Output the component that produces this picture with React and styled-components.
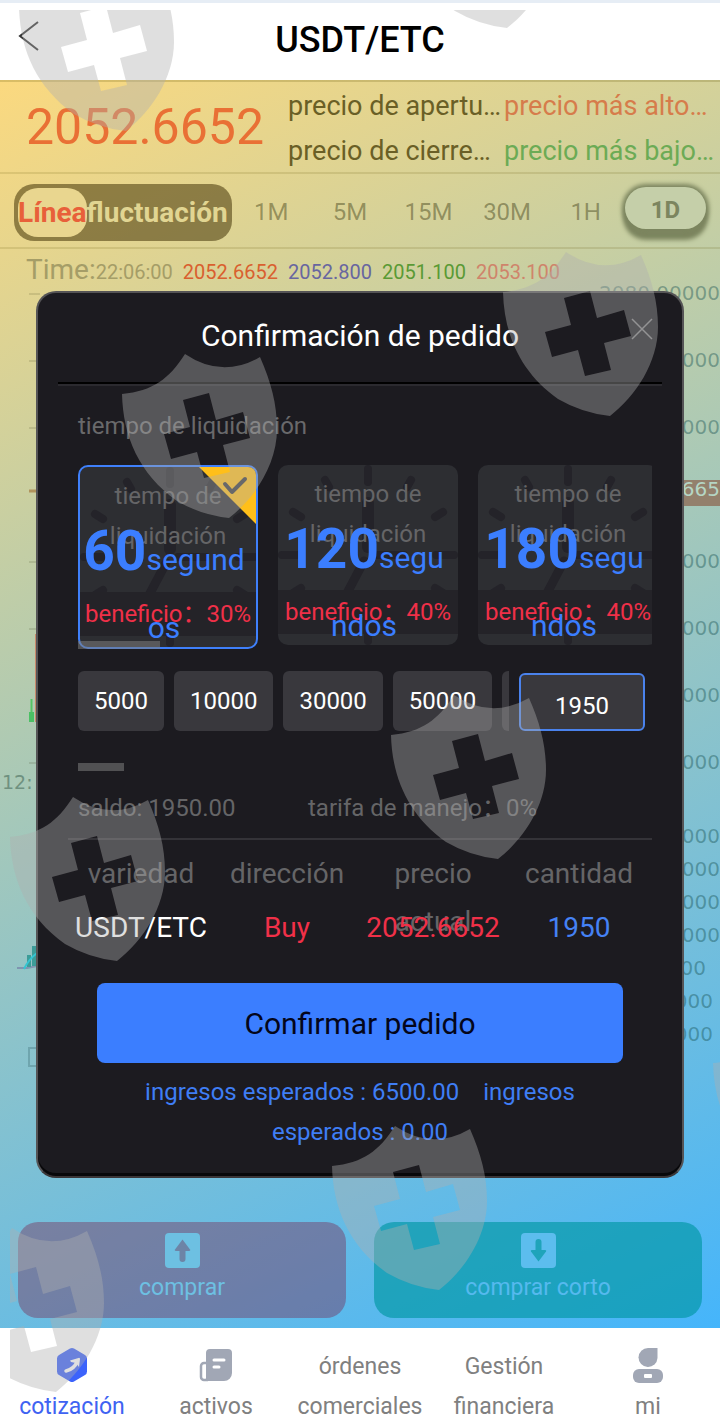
import styled, { createGlobalStyle } from "styled-components";

const GlobalStyle = createGlobalStyle`
  * {
    box-sizing: border-box;
  }

  body {
    margin: 0;
    font-family: Roboto, "Noto Sans CJK SC", sans-serif;
    font-size: 24px;
    background: #fff;
  }

  button,
  input {
    margin: 0;
    font-family: inherit;
    font-size: inherit;
  }
`;

const Page = styled.div`
  position: relative;
  overflow: hidden;
`;

const Header = styled.header`
  display: flex;
  align-items: center;
  justify-content: space-between;
  height: 80px;
  padding: 0 18px 4px;
  border-top: 3px solid #e6edf5;
  background: #fff;
`;

const IconButton = styled.button`
  display: flex;
  padding: 0;
  border: 0;
  background: none;
`;

const BackButton = styled(IconButton)`
  padding-bottom: 8px;
`;

const PageTitle = styled.h1`
  margin: 0;
  font-size: 36px;
  font-weight: 500;
  color: #000;
`;

const HeaderSpace = styled.span`
  width: 22px;
`;

const Market = styled.main`
  background: linear-gradient(155deg, #fbd97f, #45b5fb);
`;

const Quote = styled.section`
  display: flex;
  align-items: center;
  height: 94px;
  padding-left: 26px;
  border-top: 2px solid rgba(90, 80, 0, 0.2);
  border-bottom: 2px solid rgba(90, 80, 0, 0.14);
`;

const LastPrice = styled.strong`
  width: 262px;
  font-size: 50px;
  font-weight: 400;
  color: #e97035;
`;

const QuoteGrid = styled.div`
  flex: 1;
  display: grid;
  grid-template-columns: 214px 1fr;
  column-gap: 2px;
  padding-top: 3px;
  line-height: 45px;
  font-size: 27px;
  min-width: 0;
`;

const QuoteItem = styled.span`
  overflow: hidden;
  white-space: nowrap;
  text-overflow: ellipsis;
  color: ${(props) => props.$color};
`;

const Periods = styled.section`
  display: flex;
  align-items: center;
  height: 75px;
  padding: 3px 14px 0;
  border-bottom: 2px solid rgba(90, 80, 0, 0.14);
`;

const Toggle = styled.div`
  display: flex;
  align-items: center;
  width: 218px;
  height: 57px;
  padding-left: 4px;
  border-radius: 20px;
  background: rgba(60, 45, 0, 0.52);
`;

const ToggleButton = styled.button`
  height: 49px;
  padding: 0;
  border: 0;
  border-radius: 20px;
  font-size: 28px;
  font-weight: 700;
  background: ${(props) => (props.$active ? "#e9d68f" : "none")};
  color: ${(props) => (props.$active ? "#e8603a" : "#e1d592")};
`;

const PeriodList = styled.div`
  flex: 1;
  display: grid;
  grid-template-columns: repeat(6, 1fr);
  align-items: center;
`;

const Period = styled.button`
  justify-self: center;
  height: 42px;
  padding: 0;
  border: 0;
  background: none;
  color: rgba(60, 60, 20, 0.45);
`;

const ActivePeriod = styled(Period)`
  width: 81px;
  margin-bottom: 8px;
  padding-top: 4px;
  border-radius: 21px;
  font-weight: 700;
  background: #c5cfa9;
  color: #7c855f;
  box-shadow: 0 0 4px 3px #7c855f, 0 9px 4px 2px #7c855f;
`;

const TimeRow = styled.div`
  display: flex;
  align-items: baseline;
  gap: 10px;
  height: 40px;
  padding: 4px 26px 0;
  font-size: 20px;
`;

const TimeLabel = styled.span`
  color: #a59d67;

  b {
    font-size: 28px;
    font-weight: 400;
  }
`;

const Tick = styled.span`
  color: ${(props) => props.$color};
`;

const Chart = styled.section`
  display: flex;
  justify-content: space-between;
  height: 933px;
`;

const Axis = styled.div`
  width: 130px;
  margin-top: -29px;
  font-family: "DejaVu Sans", sans-serif;
  font-size: 20px;
  text-align: right;
  color: rgba(20, 80, 80, 0.42);
`;

const PriceLabel = styled.div`
  height: 67px;
  line-height: 67px;
`;

const PriceTag = styled.div`
  height: 26px;
  margin: 19px 0 22px;
  line-height: 18px;
  background: #93806c;
  color: #b5d6c4;
`;

const VolumeLabels = styled.div`
  padding-top: 24px;
`;

const VolumeLabel = styled.div`
  height: 33px;
  line-height: 33px;
  padding-right: ${(props) => props.$inset || 0}px;
`;

const TradeBar = styled.div`
  display: grid;
  grid-template-columns: 1fr 1fr;
  gap: 28px;
  padding: 0 18px 10px;
`;

const TradeButton = styled.button`
  display: flex;
  flex-direction: column;
  align-items: center;
  height: 96px;
  padding: 11px 0 0;
  border: 0;
  border-radius: 20px;
  font-size: 23px;
  line-height: 40px;
  background: ${(props) => props.$fill};
  color: ${(props) => props.$color};

  svg {
    flex: none;
  }
`;

const NavBar = styled.nav`
  display: grid;
  grid-template-columns: repeat(5, 1fr);
  height: 99px;
  background: #fff;
`;

const NavLink = styled.a`
  display: flex;
  flex-direction: column;
  align-items: center;
  padding-top: 19px;
  font-size: 23px;
  line-height: 40px;
  text-align: center;
  text-decoration: none;
  color: ${(props) => (props.$active ? "#3f63f2" : "#808080")};
`;

const NavIcon = styled.span`
  display: flex;
  align-items: center;
  height: 40px;
  padding-bottom: 4px;
`;

const Modal = styled.section`
  position: absolute;
  top: 291px;
  left: 36px;
  right: 36px;
  height: 887px;
  border: 2px solid #555456;
  border-bottom-color: #3a3638;
  border-radius: 20px;
  background: #1c1b20;
  box-shadow: inset 0 -3px 0 #08080a;
`;

const ModalHeader = styled.header`
  display: flex;
  align-items: center;
  justify-content: center;
  height: 91px;
  margin: 0 20px;
  padding-bottom: 4px;
  border-bottom: 2px solid #000;
  box-shadow: 0 2px 0 #2b2a2f;
`;

const ModalTitle = styled.h2`
  margin: 0;
  font-size: 30px;
  font-weight: 400;
  color: #fff;
`;

const CloseButton = styled(IconButton)`
  position: absolute;
  top: 25px;
  right: 29px;
`;

const ModalBody = styled.div`
  padding: 0 30px 0 40px;
`;

const SectionLabel = styled.p`
  margin: 0;
  padding: 22px 0 19px;
  line-height: 40px;
  color: #69696b;
`;

const CardList = styled.div`
  display: flex;
  align-items: flex-start;
  gap: 20px;
  height: 184px;
  overflow: hidden;
`;

const Card = styled.button`
  position: relative;
  flex: none;
  display: flex;
  flex-direction: column;
  align-items: stretch;
  width: 180px;
  height: ${(props) => (props.$active ? 184 : 180)}px;
  padding: 0;
  border: ${(props) => (props.$active ? "2px solid #3f80fb" : "0")};
  border-radius: 10px;
  overflow: hidden;
  background: #2d2e32;
`;

const ClockFace = styled.svg`
  position: absolute;
  top: 0;
  left: 0;
`;

const Corner = styled.svg`
  position: absolute;
  top: 0;
  right: 0;
`;

const CardCaption = styled.span`
  position: relative;
  height: 50px;
  padding: 9px 20px 0;
  line-height: 40px;
  color: #656567;
`;

const Seconds = styled.span`
  position: relative;
  z-index: 1;
  height: 75px;
  padding: 0 10px 0 2px;
  line-height: 68px;
  font-size: 30px;
  word-break: break-all;
  color: #3b7eff;

  b {
    font-size: 55px;
  }
`;

const Benefit = styled.span`
  position: relative;
  height: 44px;
  line-height: 44px;
  white-space: nowrap;
  background: #242328;
  color: #f03048;
`;

const ScrollThumb = styled.div`
  position: relative;
  width: ${(props) => props.$width}px;
  height: 8px;
  background: rgba(125, 125, 125, 0.55);
`;

const CardScroll = styled(ScrollThumb)`
  margin-top: -8px;
`;

const AmountRow = styled.div`
  display: flex;
  align-items: flex-end;
  gap: 10px;
  margin-top: 22px;
`;

const AmountList = styled.div`
  display: flex;
  gap: 10px;
  width: 431px;
  overflow: hidden;
`;

const Amount = styled.button`
  flex: none;
  height: 60px;
  padding: 0 16px;
  border: 0;
  border-radius: 6px;
  background: #39383d;
  color: #fff;
`;

const AmountInput = styled.input`
  width: 126px;
  height: 58px;
  padding: 8px 0 0;
  border: 2px solid #4a82ec;
  border-radius: 6px;
  text-align: center;
  background: #39383d;
  color: #fff;
`;

const AmountScroll = styled.div`
  padding: 32px 0 17px;
`;

const BalanceRow = styled.div`
  display: flex;
  line-height: 40px;
  color: #656567;
`;

const Balance = styled.span`
  width: 230px;
`;

const OrderTable = styled.table`
  display: block;
  margin: 10px 0 0 -10px;
  border-top: 2px solid #343338;
  font-size: 28px;
  line-height: 48px;

  thead,
  tbody {
    display: block;
  }

  tr {
    display: grid;
    grid-template-columns: repeat(4, 1fr);
  }

  thead tr {
    height: 64px;
    padding-top: 10px;
  }

  th {
    padding: 0 16px;
    font-weight: 400;
    color: #656567;
  }

  td {
    position: relative;
    padding: 0;
    text-align: center;
    white-space: nowrap;
  }
`;

const Cell = styled.td`
  color: ${(props) => props.$color};
`;

const ConfirmButton = styled.button`
  display: block;
  width: calc(100% - 48px);
  height: 80px;
  margin: 31px 0 0 19px;
  border: 0;
  border-radius: 8px;
  font-size: 30px;
  background: #3b7eff;
  color: #04061a;
`;

const Income = styled.p`
  margin: 9px 50px 0 40px;
  line-height: 40px;
  text-align: center;
  color: #3f7ef5;

  span + span {
    margin-left: 18px;
  }
`;

const Watermark = styled.svg`
  position: absolute;
  top: 10px;
  left: 10px;
  width: 100%;
  height: 100%;
  pointer-events: none;
`;

const shields = [
  [18, -33],
  [399, -136],
  [502, 252],
  [121, 354],
  [390, 695],
  [9, 797],
  [331, 1126],
  [-52, 1228],
  [712, 1023],
];

const ticks = [36, 103, 170, 304, 371, 505];

const cards = [
  { seconds: 60, benefit: "30%", active: true },
  { seconds: 120, benefit: "40%" },
  { seconds: 180, benefit: "40%" },
];

const amounts = [5000, 10000, 30000, 50000, 100000];

const BackIcon = () => (
  <svg width="22" height="32" viewBox="0 0 22 32" fill="none" stroke="#333" strokeWidth="2">
    <path d="M20 2 2 16l18 14" />
  </svg>
);

const CloseIcon = () => (
  <svg width="22" height="22" viewBox="0 0 22 22" stroke="#818183" strokeWidth="1.5">
    <path d="M1 1l20 20M21 1 1 21" />
  </svg>
);

const ArrowIcon = ({ down, color, arrow }) => (
  <svg width="35" height="35" viewBox="0 0 35 35">
    <rect width="35" height="35" rx="4" fill={color} />
    <g transform={down ? "rotate(180 17.5 17.5)" : undefined} fill={arrow}>
      <path d="M17.5 6.500 25 16.500a1 1 0 0 1-.8 1.500H10.800a1 1 0 0 1-.8-1.500z" />
      <rect x="14.500" y="13" width="6" height="16" rx="3" />
    </g>
  </svg>
);

const Clock = () => (
  <ClockFace width="180" height="180" viewBox="0 0 180 180" stroke="#242329" strokeLinecap="round">
    <g strokeWidth="8">
      <path d="M90 4v13M90 163v13M4 90h18M158 90h18" />
      <path d="M47 15l4 7M133 15l-4 7M15 47l8 5M165 47l-8 5M15 128l8-5M165 128l-8-5" />
    </g>
    <path d="M90 38v44" strokeWidth="12" />
    <path d="M98 90h28" strokeWidth="8" />
    <path d="M86 96 68 130" strokeWidth="9" />
  </ClockFace>
);

const SelectedCorner = () => (
  <Corner width="57" height="57" viewBox="0 0 57 57">
    <path d="M0 0h57v57z" fill="#ffbf19" />
    <path d="M26 17l7 8 13-13" fill="none" stroke="#3a3a3c" strokeWidth="4" strokeLinecap="round" strokeLinejoin="round" />
  </Corner>
);

const QuotesIcon = () => (
  <svg width="32" height="36" viewBox="0 0 32 36">
    <path d="M14 1.500a4 4 0 0 1 4 0l11 6.500a4 4 0 0 1 2 3.500v13a4 4 0 0 1-2 3.500l-11 6.500a4 4 0 0 1-4 0L3 28a4 4 0 0 1-2-3.500v-13A4 4 0 0 1 3 8z" fill="#3c63fb" />
    <path d="M10 24c5-1 9-4 11.500-10" fill="none" stroke="#fff" strokeWidth="3.5" strokeLinecap="round" />
    <path d="M14 13.500 22.500 11a1 1 0 0 1 1.500 1l-1 8-3-4-5-1z" fill="#fff" />
  </svg>
);

const AssetsIcon = () => (
  <svg width="34" height="34" viewBox="0 0 34 34">
    <path d="M8 15H5a3 3 0 0 0-3 3v11a3 3 0 0 0 3 3h4" fill="none" stroke="#a1a7b5" strokeWidth="2.5" />
    <path d="M11 1h18a4 4 0 0 1 4 4v20a8 8 0 0 1-8 8H5a3 3 0 0 0 2-3V5a4 4 0 0 1 4-4z" fill="#a1a7b5" />
    <path d="M15 12h10M15 19h5" stroke="#fff" strokeWidth="3" strokeLinecap="round" />
  </svg>
);

const UserIcon = () => (
  <svg width="30" height="35" viewBox="0 0 30 35">
    <path d="M15 0h9.500v10A9.500 9.500 0 1 1 15 0z" fill="#a1a7b5" />
    <rect y="21" width="30" height="14" rx="6" fill="#a1a7b5" />
    <rect x="11" y="26" width="8" height="4" rx="1" fill="#fff" />
  </svg>
);

const ChartDrawing = () => (
  <svg width="40" height="800" viewBox="0 0 40 800" fill="none">
    {ticks.map((y) => (
      <path key={y} d={`M29 ${y - 31}h11`} stroke="rgba(60,60,20,0.14)" strokeWidth="2" />
    ))}
    <path d="M29 202h11" stroke="#b0935c" strokeWidth="3" />
    <path d="M36 345v88" stroke="#c98a6c" strokeWidth="2" />
    <path d="M31.500 410v14" stroke="#55c465" strokeWidth="2" />
    <path d="M29 423h5v10h-5z" fill="#4bc064" />
    <path d="M17 679h10l10-2" stroke="#7f95b0" strokeWidth="2" />
    <path d="M27 666h4v12h-4zM32 657h5v20h-5z" fill="#3c9c98" />
    <path d="M24 680q5-10 13-16" stroke="#35c4d2" strokeWidth="2" />
    <path d="M40 759H29v18h11" stroke="#6fa5ae" strokeWidth="2" />
    <text x="2" y="500" fontFamily="DejaVu Sans, sans-serif" fontSize="19" fill="#6f9180">
      12:
    </text>
  </svg>
);

const OrderModal = () => (
  <Modal role="dialog" aria-labelledby="order-title">
    <ModalHeader>
      <ModalTitle id="order-title">Confirmación de pedido</ModalTitle>
      <CloseButton aria-label="cerrar">
        <CloseIcon />
      </CloseButton>
    </ModalHeader>
    <ModalBody>
      <SectionLabel>tiempo de liquidación</SectionLabel>
      <CardList>
        {cards.map((card) => (
          <Card key={card.seconds} $active={card.active}>
            <Clock />
            {card.active && <SelectedCorner />}
            <CardCaption>tiempo de liquidación</CardCaption>
            <Seconds>
              <b>{card.seconds}</b>segundos
            </Seconds>
            <Benefit>beneficio：{card.benefit}</Benefit>
          </Card>
        ))}
      </CardList>
      <CardScroll $width={82} />
      <AmountRow>
        <AmountList>
          {amounts.map((amount) => (
            <Amount key={amount}>{amount}</Amount>
          ))}
        </AmountList>
        <AmountInput aria-label="cantidad" defaultValue="1950" />
      </AmountRow>
      <AmountScroll>
        <ScrollThumb $width={46} />
      </AmountScroll>
      <BalanceRow>
        <Balance>saldo: 1950.00</Balance>
        <span>tarifa de manejo：0%</span>
      </BalanceRow>
      <OrderTable>
        <thead>
          <tr>
            <th>variedad</th>
            <th>dirección</th>
            <th>precio actual</th>
            <th>cantidad</th>
          </tr>
        </thead>
        <tbody>
          <tr>
            <Cell $color="#fff">USDT/ETC</Cell>
            <Cell $color="#f03048">Buy</Cell>
            <Cell $color="#f03048">2052.6652</Cell>
            <Cell $color="#4582f5">1950</Cell>
          </tr>
        </tbody>
      </OrderTable>
      <ConfirmButton>Confirmar pedido</ConfirmButton>
      <Income>
        <span>ingresos esperados : 6500.00</span> <span>ingresos esperados : 0.00</span>
      </Income>
    </ModalBody>
  </Modal>
);

const App = () => {
  return (
    <Page>
      <GlobalStyle />
      <Header>
        <BackButton aria-label="volver">
          <BackIcon />
        </BackButton>
        <PageTitle>USDT/ETC</PageTitle>
        <HeaderSpace />
      </Header>
      <Market>
        <Quote>
          <LastPrice>2052.6652</LastPrice>
          <QuoteGrid>
            <QuoteItem $color="#6a5f26">precio de apertura：2052.800</QuoteItem>
            <QuoteItem $color="#d67c4b">precio más alto：2053.100</QuoteItem>
            <QuoteItem $color="#6a5f26">precio de cierre：2052.6652</QuoteItem>
            <QuoteItem $color="#6cab55">precio más bajo：2051.100</QuoteItem>
          </QuoteGrid>
        </Quote>
        <Periods>
          <Toggle>
            <ToggleButton $active>Línea</ToggleButton>
            <ToggleButton>fluctuación</ToggleButton>
          </Toggle>
          <PeriodList>
            {["1M", "5M", "15M", "30M", "1H"].map((period) => (
              <Period key={period}>{period}</Period>
            ))}
            <ActivePeriod>1D</ActivePeriod>
          </PeriodList>
        </Periods>
        <TimeRow>
          <TimeLabel>
            <b>Time:</b>22:06:00
          </TimeLabel>
          <Tick $color="#d9602f">2052.6652</Tick>
          <Tick $color="#6866a0">2052.800</Tick>
          <Tick $color="#5a9a35">2051.100</Tick>
          <Tick $color="#cf846b">2053.100</Tick>
        </TimeRow>
        <Chart>
          <ChartDrawing />
          <Axis>
            <PriceLabel>2080.00000</PriceLabel>
            <PriceLabel>2072.00000</PriceLabel>
            <PriceLabel>2064.00000</PriceLabel>
            <PriceTag>2052.665</PriceTag>
            <PriceLabel>2048.00000</PriceLabel>
            <PriceLabel>2040.00000</PriceLabel>
            <PriceLabel>2032.00000</PriceLabel>
            <PriceLabel>2024.00000</PriceLabel>
            <VolumeLabels>
              <VolumeLabel>60000</VolumeLabel>
              <VolumeLabel>50000</VolumeLabel>
              <VolumeLabel>40000</VolumeLabel>
              <VolumeLabel>30000</VolumeLabel>
              <VolumeLabel $inset={14}>2000</VolumeLabel>
              <VolumeLabel $inset={7}>1000</VolumeLabel>
              <VolumeLabel $inset={7}>1000</VolumeLabel>
            </VolumeLabels>
          </Axis>
        </Chart>
        <TradeBar>
          <TradeButton $fill="rgba(125, 20, 61, 0.36)" $color="#6dc0e2">
            <ArrowIcon color="#6dc0e2" arrow="#6d84a6" />
            comprar
          </TradeButton>
          <TradeButton $fill="rgba(0, 150, 163, 0.65)" $color="#55b9ee">
            <ArrowIcon down color="#5cbdee" arrow="#1fa4ba" />
            comprar corto
          </TradeButton>
        </TradeBar>
      </Market>
      <NavBar>
        <NavLink href="#quotes" $active>
          <NavIcon>
            <QuotesIcon />
          </NavIcon>
          cotización
        </NavLink>
        <NavLink href="#assets">
          <NavIcon>
            <AssetsIcon />
          </NavIcon>
          activos
        </NavLink>
        <NavLink href="#orders">órdenes comerciales</NavLink>
        <NavLink href="#finance">Gestión financiera</NavLink>
        <NavLink href="#me">
          <NavIcon>
            <UserIcon />
          </NavIcon>
          mi
        </NavLink>
      </NavBar>
      <OrderModal />
      <Watermark fill="rgb(175, 175, 175)" fillOpacity="0.4" fillRule="evenodd" aria-hidden="true">
        {shields.map(([x, y]) => (
          <path
            key={`${x},${y}`}
            transform={`translate(${x - 10} ${y - 10})`}
            d="M64 0Q101 25 139 3C150 28 156 50 156 75C156 110 134 144 108 164Q80 161 56 147C18 120 2 82 1 40C32 37 48 25 64 0ZM62 46 88 39 95 66 122 58 129 84 102 91 109 118 83 124 76 98 50 105 43 80 69 73Z"
          />
        ))}
      </Watermark>
    </Page>
  );
};

export default App;
